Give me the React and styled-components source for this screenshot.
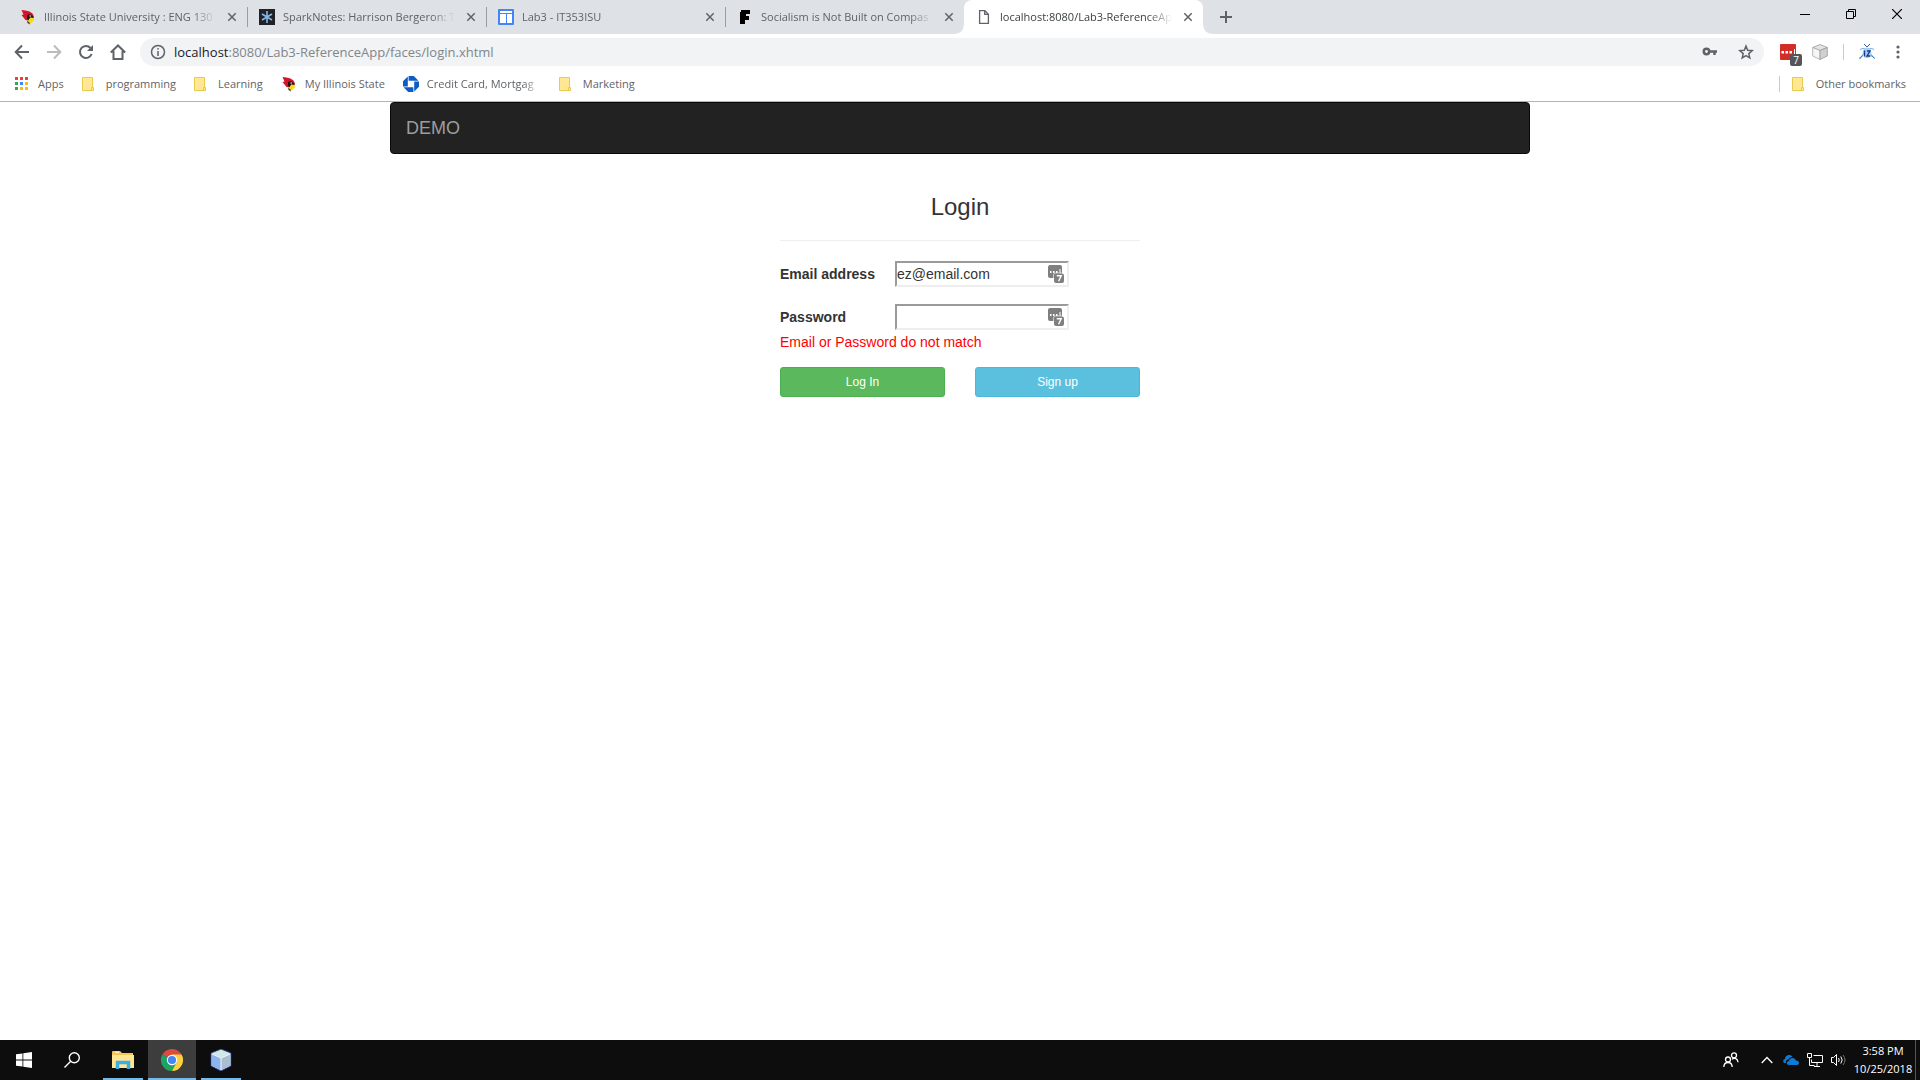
import React from "react";
import styled, { createGlobalStyle, css } from "styled-components";

const Global = createGlobalStyle`
  *, *::before, *::after { box-sizing: border-box; }
  html, body { margin: 0; background: #fff; }
  body { font-family: "Liberation Sans", Arial, sans-serif; font-size: 14px; line-height: 20px; color: #333; overflow: hidden; }
  svg { display: block; flex: none; }
  button { font: inherit; color: inherit; background: none; border: 0; padding: 0; }
  a { color: inherit; text-decoration: none; }
`;

const uiFont = css`
  font-family: "Open Sans", "Noto Sans", sans-serif;
`;

const Screen = styled.div`
  height: 100vh;
  display: flex;
  flex-direction: column;
`;

const Browser = styled.header`
  ${uiFont}
  font-size: 12px;
  line-height: 16px;
  color: #5f6368;
  border-bottom: 1px solid #b6b4b6;
`;

const TabStrip = styled.nav`
  display: flex;
  align-items: stretch;
  height: 34px;
  padding-left: 8px;
  background: #dee1e6;
`;

const Tab = styled.div`
  position: relative;
  display: flex;
  align-items: center;
  flex: 0 1 239px;
  min-width: 0;
  padding: 0 7px 0 12px;
  gap: 8px;
  color: ${(p) => (p.$active ? "#3c4043" : "#5f6368")};
  ${(p) =>
    p.$divided &&
    css`
      &::after {
        content: "";
        position: absolute;
        right: -1px;
        top: 7px;
        width: 1px;
        height: 20px;
        background: #9a9da1;
      }
    `}
  ${(p) =>
    p.$active &&
    css`
      background: #fff;
      border-radius: 8px 8px 0 0;
      &::before,
      &::after {
        content: "";
        position: absolute;
        bottom: 0;
        width: 8px;
        height: 8px;
      }
      &::before {
        left: -8px;
        background: radial-gradient(circle at 0 0, transparent 7px, #fff 8px);
      }
      &::after {
        right: -8px;
        background: radial-gradient(circle at 100% 0, transparent 7px, #fff 8px);
      }
    `}
`;

const TabTitle = styled.a`
  flex: 1;
  min-width: 0;
  overflow: hidden;
  white-space: nowrap;
  font-size: 11px;
  mask-image: linear-gradient(to right, #000 calc(100% - 24px), transparent);
`;

const IconButton = styled.button`
  display: flex;
  align-items: center;
  justify-content: center;
  flex: none;
  width: ${(p) => p.$w || 16}px;
  height: ${(p) => p.$h || 16}px;
`;

const NewTab = styled(IconButton)`
  align-self: center;
  margin-left: 8px;
`;

const WindowControls = styled.div`
  display: flex;
  margin-left: auto;
  color: #000;
`;

const Toolbar = styled.div`
  display: flex;
  align-items: center;
  height: 36px;
  padding: 0 14px 0 6px;
`;

const Omnibox = styled.form`
  display: flex;
  align-items: center;
  flex: 1;
  height: 28px;
  margin: 0 8px 0 6px;
  padding: 0 4px 0 10px;
  gap: 8px;
  border-radius: 14px;
  background: #f1f3f4;
`;

const Address = styled.div`
  flex: 1;
  font-size: 13px;
  line-height: 20px;
  color: #80868b;
`;

const Host = styled.span`
  color: #202124;
`;

const Extensions = styled.div`
  display: flex;
  align-items: center;
  gap: 15px;
  padding-left: 8px;
`;

const BadgedExtension = styled.span`
  position: relative;
  width: 17px;
  height: 16px;
`;

const ExtensionBadge = styled.span`
  position: absolute;
  left: 10px;
  top: 10px;
  width: 12px;
  height: 12px;
  border-radius: 2px;
  background: #54575a;
  color: #fff;
  font-size: 10px;
  line-height: 12px;
  text-align: center;
`;

const Rule = styled.span`
  width: 1px;
  height: 16px;
  background: #c8cacd;
`;

const BookmarkBar = styled.nav`
  display: flex;
  align-items: center;
  height: 31px;
  padding: 0 14px 3px;
  gap: 18px;
  font-size: 11px;
`;

const Bookmark = styled.a`
  display: flex;
  align-items: center;
  flex: none;
  gap: 8px;
  white-space: nowrap;
`;

const BookmarkText = styled.span`
  ${(p) =>
    p.$faded &&
    css`
      width: 114px;
      mask-image: linear-gradient(to right, #000 85%, transparent);
    `}
`;

const OtherBookmarks = styled.div`
  display: flex;
  align-items: center;
  gap: 12px;
  margin-left: auto;
`;

const Page = styled.main`
  flex: 1;
`;

const Container = styled.div`
  max-width: 1140px;
  margin: 0 auto;
`;

const Navbar = styled.nav`
  display: flex;
  align-items: center;
  height: 52px;
  padding: 0 15px;
  border: 1px solid #080808;
  border-radius: 4px;
  background: #222;
`;

const Brand = styled.a`
  font-size: 18px;
  line-height: 20px;
  color: #9d9d9d;
`;

const LoginForm = styled.form`
  display: flex;
  flex-direction: column;
  width: 360px;
  margin: 40px auto 0;
`;

const Title = styled.h3`
  margin: 0;
  padding-bottom: 20px;
  border-bottom: 1px solid #eee;
  text-align: center;
  font-size: 24px;
  line-height: 26px;
  font-weight: 500;
`;

const Fields = styled.div`
  display: grid;
  gap: 17px;
  padding-top: 20px;
`;

const Field = styled.div`
  display: grid;
  grid-template-columns: 115px 174px;
  align-items: center;
`;

const Label = styled.label`
  font-weight: 700;
`;

const InputWrap = styled.div`
  position: relative;
`;

const Input = styled.input`
  display: block;
  width: 100%;
  height: 26px;
  padding: 1px 0;
  border: 2px solid;
  border-color: #9a9a9a #eee #eee #9a9a9a;
  background: #fff;
  color: #333;
  font: inherit;
  outline: 0;
`;

const Vault = styled.span`
  position: absolute;
  right: 5px;
  top: 4px;
`;

const ErrorText = styled.p`
  margin: 2px 0 15px;
  color: #f00;
`;

const Actions = styled.div`
  display: grid;
  grid-template-columns: 1fr 1fr;
  gap: 30px;
`;

const Action = styled.button`
  height: 30px;
  border: 1px solid ${(p) => (p.$info ? "#46b8da" : "#4cae4c")};
  border-radius: 3px;
  background: ${(p) => (p.$info ? "#5bc0de" : "#5cb85c")};
  color: #fff;
  font-size: 12px;
  line-height: 18px;
`;

const Taskbar = styled.footer`
  ${uiFont}
  display: flex;
  height: 40px;
  background: #0d0d0d;
  color: #fff;
`;

const RunningApps = styled.div`
  display: flex;
  gap: 1px;
  margin-left: 3px;
`;

const TaskButton = styled.button`
  position: relative;
  display: flex;
  align-items: center;
  justify-content: center;
  width: ${(p) => p.$w || 48}px;
  background: ${(p) => (p.$active ? "#3d3d3d" : "transparent")};
  ${(p) =>
    p.$running &&
    css`
      &::after {
        content: "";
        position: absolute;
        left: ${p.$active ? 0 : 4}px;
        right: ${p.$active ? 0 : 4}px;
        bottom: 0;
        height: 2px;
        background: #76b9ed;
      }
    `}
`;

const Tray = styled.div`
  display: flex;
  margin-left: auto;
`;

const Clock = styled.time`
  display: flex;
  flex-direction: column;
  justify-content: center;
  align-items: center;
  width: 65px;
  font-size: 11px;
  line-height: 18px;
  border-right: 1px solid #555;
  margin-right: 4px;
  white-space: nowrap;
`;

const Redbird = () => (
  <svg width="16" height="16" viewBox="0 0 16 16">
    <path d="M1.500 1l4 .5 4 1 3 2 1.500 3-1 2.500-3-1-1.500 2.500-3-.5-2-2.500L1.500 6l2-.5z" fill="#d3142c" />
    <path d="M7 6l3-1 3 2.500.5 1.500-3-.5-1.500 3-2-1.500z" fill="#241416" />
    <path d="M10.200 8.500l3 .5 1 2-1.500 1.500-2 2-2.200-.5-.5-2z" fill="#f4dd16" />
    <path d="M7 11.500l2.500 2 .5 2-2.500-1.500z" fill="#4d3a12" />
    <path d="M9.500 6.500h1.500v1H9.500z" fill="#fff" />
  </svg>
);
const Spark = () => (
  <svg width="16" height="16" viewBox="0 0 16 16">
    <path d="M0 0h16v16H0z" fill="#212126" />
    <path d="M8 2v12M3 5l10 6M13 5L3 11" stroke="#84b9e5" strokeWidth="1.600" />
  </svg>
);
const Sites = () => (
  <svg width="16" height="16" viewBox="0 0 16 16">
    <rect width="16" height="16" rx="1" fill="#4285f4" />
    <path d="M2 2h12v2H2zM2 5h6v9H2zM9 5h5v9H9z" fill="#fff" />
  </svg>
);
const LetterMark = () => (
  <svg width="16" height="16" viewBox="0 0 16 16">
    <path d="M4 1h9v4H9v2h3v4H8v4H3V3h1z" fill="#000" />
  </svg>
);
const Doc = () => (
  <svg width="16" height="16" viewBox="0 0 16 16" fill="none" stroke="#5f6368" strokeWidth="1.300">
    <path d="M3.600 1.600h5.200l3.600 3.700v9.100H3.600zM8.700 1.600v3.800h3.700" />
  </svg>
);
const Close = () => (
  <svg width="16" height="16" viewBox="0 0 16 16" stroke="#5f6368" strokeWidth="1.500">
    <path d="M4.300 4.300l7.400 7.400M11.700 4.300l-7.400 7.400" />
  </svg>
);
const Folder = () => (
  <svg width="16" height="16" viewBox="0 0 16 16" fill="#ffe793" stroke="#eac94f">
    <path d="M.5 1.500h10v13H.5z" />
    <path d="M9.500 14.500v-3h2v3z" />
  </svg>
);
const Apps = () => (
  <svg width="16" height="16" viewBox="0 0 16 16">
    {["#ea4335", "#ea4335", "#ea4335", "#34a853", "#4285f4", "#fbbc05", "#34a853", "#fbbc05", "#fbbc05"].map((c, i) => (
      <rect key={i} x={1 + (i % 3) * 5} y={1 + Math.floor(i / 3) * 5} width="3" height="3" fill={c} />
    ))}
  </svg>
);
const Bank = () => (
  <svg width="16" height="16" viewBox="0 0 16 16">
    <g fill="#0b5cc4">
      {[0, 90, 180, 270].map((turn) => (
        <path key={turn} transform={`rotate(${turn} 8 8)`} d="M5.600 0h5.200l4.600 4.800H5.600z" />
      ))}
    </g>
    <path d="M5 5h6v6H5z" fill="#fff" />
  </svg>
);
const VaultIcon = () => (
  <svg width="16" height="18" viewBox="0 0 16 18">
    <rect width="14" height="13" rx="2" fill="#7f7f7f" />
    <path d="M2 6h1.500v2H2zM5 6h1.500v2H5zM8 6h1.500v2H8zM11.500 4h1v4h-1z" fill="#fff" />
    <rect x="6" y="8.500" width="10" height="9.500" rx="2" fill="#7f7f7f" />
    <path d="M5.500 13V10q0-2 2-2H14" fill="none" stroke="#fff" strokeWidth=".6" />
    <path d="M8.800 10.700h4.400l-2.600 5.500" fill="none" stroke="#fff" strokeWidth="1.400" />
  </svg>
);

const tabs = [
  ["Illinois State University : ENG 130", Redbird],
  ["SparkNotes: Harrison Bergeron: T", Spark],
  ["Lab3 - IT353ISU", Sites],
  ["Socialism is Not Built on Compas", LetterMark],
  ["localhost:8080/Lab3-ReferenceAp", Doc],
];

const bookmarks = [
  ["Apps", Apps],
  ["programming", Folder],
  ["Learning", Folder],
  ["My Illinois State", Redbird],
  ["Credit Card, Mortgag", Bank, true],
  ["Marketing", Folder],
];

const BrowserChrome = () => (
  <Browser>
    <TabStrip aria-label="Tabs">
      {tabs.map(([title, Icon], i) => (
        <Tab key={title} $active={i === 4} $divided={i < 3}>
          <Icon />
          <TabTitle href="#">{title}</TabTitle>
          <IconButton aria-label="Close tab"><Close /></IconButton>
        </Tab>
      ))}
      <NewTab $w={30} $h={28} aria-label="New tab">
        <svg width="14" height="14" viewBox="0 0 14 14" stroke="#5f6368" strokeWidth="2"><path d="M7 1v12M1 7h12" /></svg>
      </NewTab>
      <WindowControls>
        <IconButton $w={46} $h={28} aria-label="Minimize">
          <svg width="10" height="10" viewBox="0 0 10 10"><path d="M0 5h10v1H0z" /></svg>
        </IconButton>
        <IconButton $w={46} $h={28} aria-label="Restore">
          <svg width="10" height="10" viewBox="0 0 10 10" fill="none" stroke="#000"><path d="M.5 2.500h7v7h-7zM2.500 2.500v-2h7v7h-2" /></svg>
        </IconButton>
        <IconButton $w={46} $h={28} aria-label="Close">
          <svg width="10" height="10" viewBox="0 0 10 10" stroke="#000" strokeWidth="1.200"><path d="M0 0l10 10M10 0L0 10" /></svg>
        </IconButton>
      </WindowControls>
    </TabStrip>
    <Toolbar>
      <IconButton $w={32} $h={28} aria-label="Back">
        <svg width="16" height="16" viewBox="0 0 16 16" fill="none" stroke="#5f6368" strokeWidth="2"><path d="M15 8H2.500M8 1.500L1.700 8 8 14.500" /></svg>
      </IconButton>
      <IconButton $w={32} $h={28} aria-label="Forward">
        <svg width="16" height="16" viewBox="0 0 16 16" fill="none" stroke="#babcbe" strokeWidth="2"><path d="M1 8h12.500M8 1.500L14.300 8 8 14.500" /></svg>
      </IconButton>
      <IconButton $w={32} $h={28} aria-label="Reload">
        <svg width="16" height="16" viewBox="0 0 16 16" fill="none" stroke="#5f6368" strokeWidth="2"><path d="M13.600 10A6 6 0 1 1 12.500 4" /><path d="M15 1v6H9z" fill="#5f6368" stroke="none" /></svg>
      </IconButton>
      <IconButton $w={32} $h={28} aria-label="Home">
        <svg width="16" height="16" viewBox="0 0 16 16" fill="none" stroke="#5f6368" strokeWidth="2"><path d="M.8 8.500L8 1.500l7.200 7M3.500 7v8h9V7" /></svg>
      </IconButton>
      <Omnibox>
        <svg width="16" height="16" viewBox="0 0 16 16" fill="none" stroke="#5f6368" strokeWidth="1.500"><circle cx="8" cy="8" r="6.500" /><path d="M8 7v5M8 4v1.600" /></svg>
        <Address><Host>localhost</Host>:8080/Lab3-ReferenceApp/faces/login.xhtml</Address>
        <IconButton type="button" $w={28} aria-label="Saved passwords">
          <svg width="16" height="16" viewBox="0 0 16 16" fill="none" stroke="#5f6368" strokeWidth="2.500"><circle cx="4.500" cy="7.500" r="2.700" /><path d="M7 7.500h8M12.500 7.500v3.500" /></svg>
        </IconButton>
        <IconButton type="button" $w={28} aria-label="Bookmark">
          <svg width="16" height="16" viewBox="0 0 16 16" fill="none" stroke="#5f6368" strokeWidth="1.500"><path d="M8 2l1.700 4.200 4.500.4-3.400 3 1 4.400L8 11.700 4.200 14l1-4.400-3.400-3 4.500-.4z" /></svg>
        </IconButton>
      </Omnibox>
      <Extensions>
        <BadgedExtension>
          <svg width="16" height="16" viewBox="0 0 16 16">
            <rect width="16" height="16" rx="1" fill="#d32d27" />
            <path d="M1.500 7h2.500v2.500H1.500zM5.500 7H8v2.500H5.500zM9.500 7H12v2.500H9.500zM14 5h1v5h-1z" fill="#fff" />
          </svg>
          <ExtensionBadge>7</ExtensionBadge>
        </BadgedExtension>
        <svg width="16" height="16" viewBox="0 0 16 16" strokeWidth=".8">
          <path d="M8 .5l7.300 3-7.300 3-7.300-3z" fill="#e4e4e4" stroke="#999" />
          <path d="M.7 3.500l7.300 3v9L.7 12z" fill="#f6f6f6" stroke="#aaa" />
          <path d="M8 6.500l7.300-3V12L8 15.500z" fill="#d0d0d0" stroke="#999" />
        </svg>
        <Rule />
        <svg width="16" height="16" viewBox="0 0 16 16" fill="none">
          <path d="M5 0l3 3 3-3" stroke="#2f5fae" />
          <path d="M1 5.500Q5 3 9 7t6 7M15 5.500Q11 3 7 7t-6 8" stroke="#5aa4e2" strokeWidth=".9" />
          <path d="M5 5q3-3 6 0l1.500 4L10 14H6L3.500 9z" fill="#a9cdef" />
          <path d="M0 14.500l4-3M16 14.500l-4-3" stroke="#2b7fd0" />
          <path d="M5.500 6.500v6M8 7h3l-3 5h3.500" stroke="#123d91" strokeWidth="1.400" />
        </svg>
        <IconButton aria-label="Menu">
          <svg width="16" height="16" viewBox="0 0 16 16" fill="#5f6368"><circle cx="8" cy="3" r="1.600" /><circle cx="8" cy="8" r="1.600" /><circle cx="8" cy="13" r="1.600" /></svg>
        </IconButton>
      </Extensions>
    </Toolbar>
    <BookmarkBar aria-label="Bookmarks">
      {bookmarks.map(([name, Icon, faded]) => (
        <Bookmark href="#" key={name}><Icon /><BookmarkText $faded={faded}>{name}</BookmarkText></Bookmark>
      ))}
      <OtherBookmarks><Rule /><Bookmark href="#"><Folder /><BookmarkText>Other bookmarks</BookmarkText></Bookmark></OtherBookmarks>
    </BookmarkBar>
  </Browser>
);

const LoginPage = () => (
  <Page>
    <Container>
      <Navbar><Brand href="#">DEMO</Brand></Navbar>
      <LoginForm>
        <Title>Login</Title>
        <Fields>
          <Field>
            <Label htmlFor="email">Email address</Label>
            <InputWrap><Input id="email" type="text" defaultValue="ez@email.com" /><Vault><VaultIcon /></Vault></InputWrap>
          </Field>
          <Field>
            <Label htmlFor="password">Password</Label>
            <InputWrap><Input id="password" type="password" /><Vault><VaultIcon /></Vault></InputWrap>
          </Field>
        </Fields>
        <ErrorText>Email or Password do not match</ErrorText>
        <Actions><Action type="button">Log In</Action><Action type="button" $info>Sign up</Action></Actions>
      </LoginForm>
    </Container>
  </Page>
);

const SystemBar = () => (
  <Taskbar>
    <TaskButton aria-label="Start">
      <svg width="16" height="16" viewBox="0 0 16 16" fill="#fff"><path d="M0 2.300l6.500-.9v6.100H0zM7.300 1.300L16 0v7.500H7.300zM0 8.400h6.500v6.200L0 13.700zM7.300 8.400H16V16l-8.700-1.300z" /></svg>
    </TaskButton>
    <TaskButton aria-label="Search">
      <svg width="16" height="16" viewBox="0 0 16 16" fill="none" stroke="#fff" strokeWidth="1.400"><circle cx="10.300" cy="5.700" r="5" /><path d="M6.700 9.300L.5 15.500" /></svg>
    </TaskButton>
    <RunningApps>
      <TaskButton $running aria-label="File Explorer">
        <svg width="22" height="18" viewBox="0 0 22 18">
          <path d="M0 1q0-1 1-1h7l2 2h11v15H0z" fill="#f6c65b" /><path d="M0 4h22v13H0z" fill="#ffe594" /><path d="M3 1.200h4" stroke="#fff" /><path d="M5.500 18v-6.500h11V18" fill="none" stroke="#3bb1e3" strokeWidth="3.500" />
        </svg>
      </TaskButton>
      <TaskButton $active $running aria-label="Chrome">
        <svg width="22" height="22" viewBox="0 0 22 22">
          <path d="M11 11L1.470 5.500A11 11 0 0 1 20.530 5.500z" fill="#dd4b3e" /><path d="M11 11L1.470 5.500A11 11 0 0 0 11 22l5-8z" fill="#1da362" /><path d="M11 5.500h9.530A11 11 0 0 1 11 22l4.500-8.400z" fill="#fdd041" />
          <circle cx="11" cy="11" r="5.200" fill="#fff" /><circle cx="11" cy="11" r="4.100" fill="#4486f3" />
        </svg>
      </TaskButton>
      <TaskButton $running aria-label="NetBeans">
        <svg width="22" height="22" viewBox="0 0 22 22">
          <path d="M11 0l10 4v13l-10 5-10-5V4z" fill="#b6cbe0" stroke="#23358c" strokeWidth=".8" /><path d="M11 1l9 3.500-9 4-9-4z" fill="#d2e8e4" /><path d="M1.500 5l9.500 4v12l-9.500-4.500z" fill="#8eb4ee" /><path d="M11 9l9.500-4v11.500L11 21z" fill="#aabfcd" /><path d="M11 9v12M2 5l9 4 9-4" stroke="#edf8ff" fill="none" />
        </svg>
      </TaskButton>
    </RunningApps>
    <Tray>
      <TaskButton aria-label="People">
        <svg width="16" height="16" viewBox="0 0 16 16" fill="none" stroke="#fff" strokeWidth="1.300"><circle cx="5" cy="7.500" r="2.500" /><path d="M.8 15c.2-6 8.200-6 8.400 0" /><circle cx="11" cy="3.300" r="2.500" /><path d="M9 7.200c2.500-2 5.800-.5 6 3" /></svg>
      </TaskButton>
      <TaskButton $w={24} aria-label="Show hidden icons">
        <svg width="12" height="8" viewBox="0 0 12 8" fill="none" stroke="#fff" strokeWidth="1.300"><path d="M.7 7L6 1.500 11.300 7" /></svg>
      </TaskButton>
      <TaskButton $w={24} aria-label="OneDrive">
        <svg width="16" height="10" viewBox="0 0 16 10" fill="#0a7bd8"><path d="M3 8H1.500C-.5 7.500 0 4 2 4c0-4 5.500-5.500 7.500-2C6.500 2 6 4 5.500 4.500 3.500 4.500 2.500 6 3 8z" /><path d="M6 10c-3 0-3-4 0-4 .5-4 6-4 7-.5 3.500 0 4 4 1 4.500z" /></svg>
      </TaskButton>
      <TaskButton $w={24} aria-label="Network">
        <svg width="16" height="14" viewBox="0 0 16 14" fill="none" stroke="#fff"><path d="M6.500 2.500h9v7h-11V6.500M.5.500h4v4h-4zM2.500 4.500v8h5M7 13.500h6M10 9.500v4" /></svg>
      </TaskButton>
      <TaskButton $w={24} aria-label="Volume">
        <svg width="16" height="14" viewBox="0 0 16 14" fill="none" stroke="#fff"><path d="M.5 4.500h2l3-3v11l-3-3h-2zM7.500 5q1.500 2 0 4M9.800 3.500q2.800 3.500 0 7" /><path d="M12 2q4 5 0 10" stroke="#777" /></svg>
      </TaskButton>
      <Clock><span>3:58 PM</span><span>10/25/2018</span></Clock>
    </Tray>
  </Taskbar>
);

export default function App() {
  return (
    <Screen>
      <Global />
      <BrowserChrome />
      <LoginPage />
      <SystemBar />
    </Screen>
  );
}
